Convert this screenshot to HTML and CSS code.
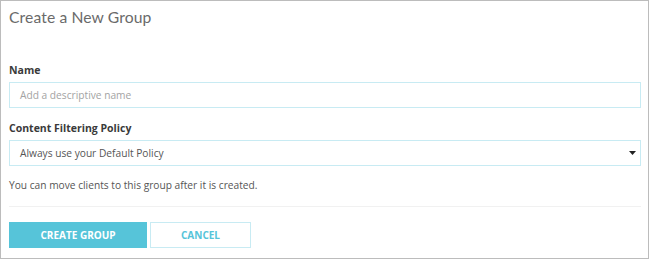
FILE: index.html
```html
<!DOCTYPE html>
<html>
<head>
<meta charset="utf-8">
<link rel="stylesheet" href="styles.css">
</head>
<body>
<div class="frame">
  <h1 class="title">Create a New Group</h1>
  <label class="label label-first">Name</label>
  <div class="field"><span class="placeholder">Add a descriptive name</span></div>
  <label class="label label-second">Content Filtering Policy</label>
  <div class="field select">
    <span class="value">Always use your Default Policy</span>
    <svg class="caret" width="7" height="4" viewBox="0 0 7 4"><path d="M0 0H7L3.5 4Z" fill="#222"/></svg>
  </div>
  <p class="help">You can move clients to this group after it is created.</p>
  <div class="divider"></div>
  <div class="actions">
    <button class="btn btn-primary">CREATE GROUP</button>
    <button class="btn btn-secondary">CANCEL</button>
  </div>
</div>
</body>
</html>
```
FILE: styles.css
```css
html, body { margin: 0; padding: 0; background: #fff; }
body { width: 650px; height: 260px; }
.frame {
  box-sizing: border-box;
  width: 649px;
  height: 259px;
  border: 1px solid #bcbcbc;
  padding: 6px 7px 0 8px;
  font-family: "Open Sans", "Liberation Sans", sans-serif;
}
.title {
  margin: 0;
  font-family: Lato, "Open Sans", sans-serif;
  font-weight: 400;
  font-size: 15.7px;
  line-height: 20px;
  color: #6a6a6a;
  letter-spacing: 0.1px;
}
.label {
  display: block;
  font-size: 10.5px;
  font-weight: 700;
  line-height: 16px;
  color: #3a3a3a;
  margin-bottom: 4px;
}
.label-first { margin-top: 35px; }
.label-second { margin-top: 12px; }
.field {
  box-sizing: border-box;
  height: 26px;
  border: 1px solid #c8ebf3;
  display: flex;
  align-items: center;
  padding: 0 10px;
  font-size: 10.2px;
}
.placeholder { color: #a3a3a3; }
.value { color: #555; flex: 1; }
.select { justify-content: space-between; padding-right: 4px; }
.help {
  margin: 11px 0 0;
  font-size: 10.2px;
  line-height: 16px;
  color: #555;
}
.divider {
  margin-top: 13px;
  height: 1px;
  background: #f1f1f1;
}
.actions {
  margin-top: 15px;
  display: flex;
  gap: 3px;
}
.btn {
  box-sizing: border-box;
  height: 26px;
  font-family: "Open Sans", sans-serif;
  font-size: 10px;
  font-weight: 700;
  padding: 0;
  cursor: pointer;
}
.btn-primary {
  width: 138px;
  background: #56c4d9;
  border: 1px solid #56c4d9;
  color: #fff;
}
.btn-secondary {
  width: 101px;
  background: #fff;
  border: 1px solid #c8ebf3;
  color: #56c4d9;
}
```
